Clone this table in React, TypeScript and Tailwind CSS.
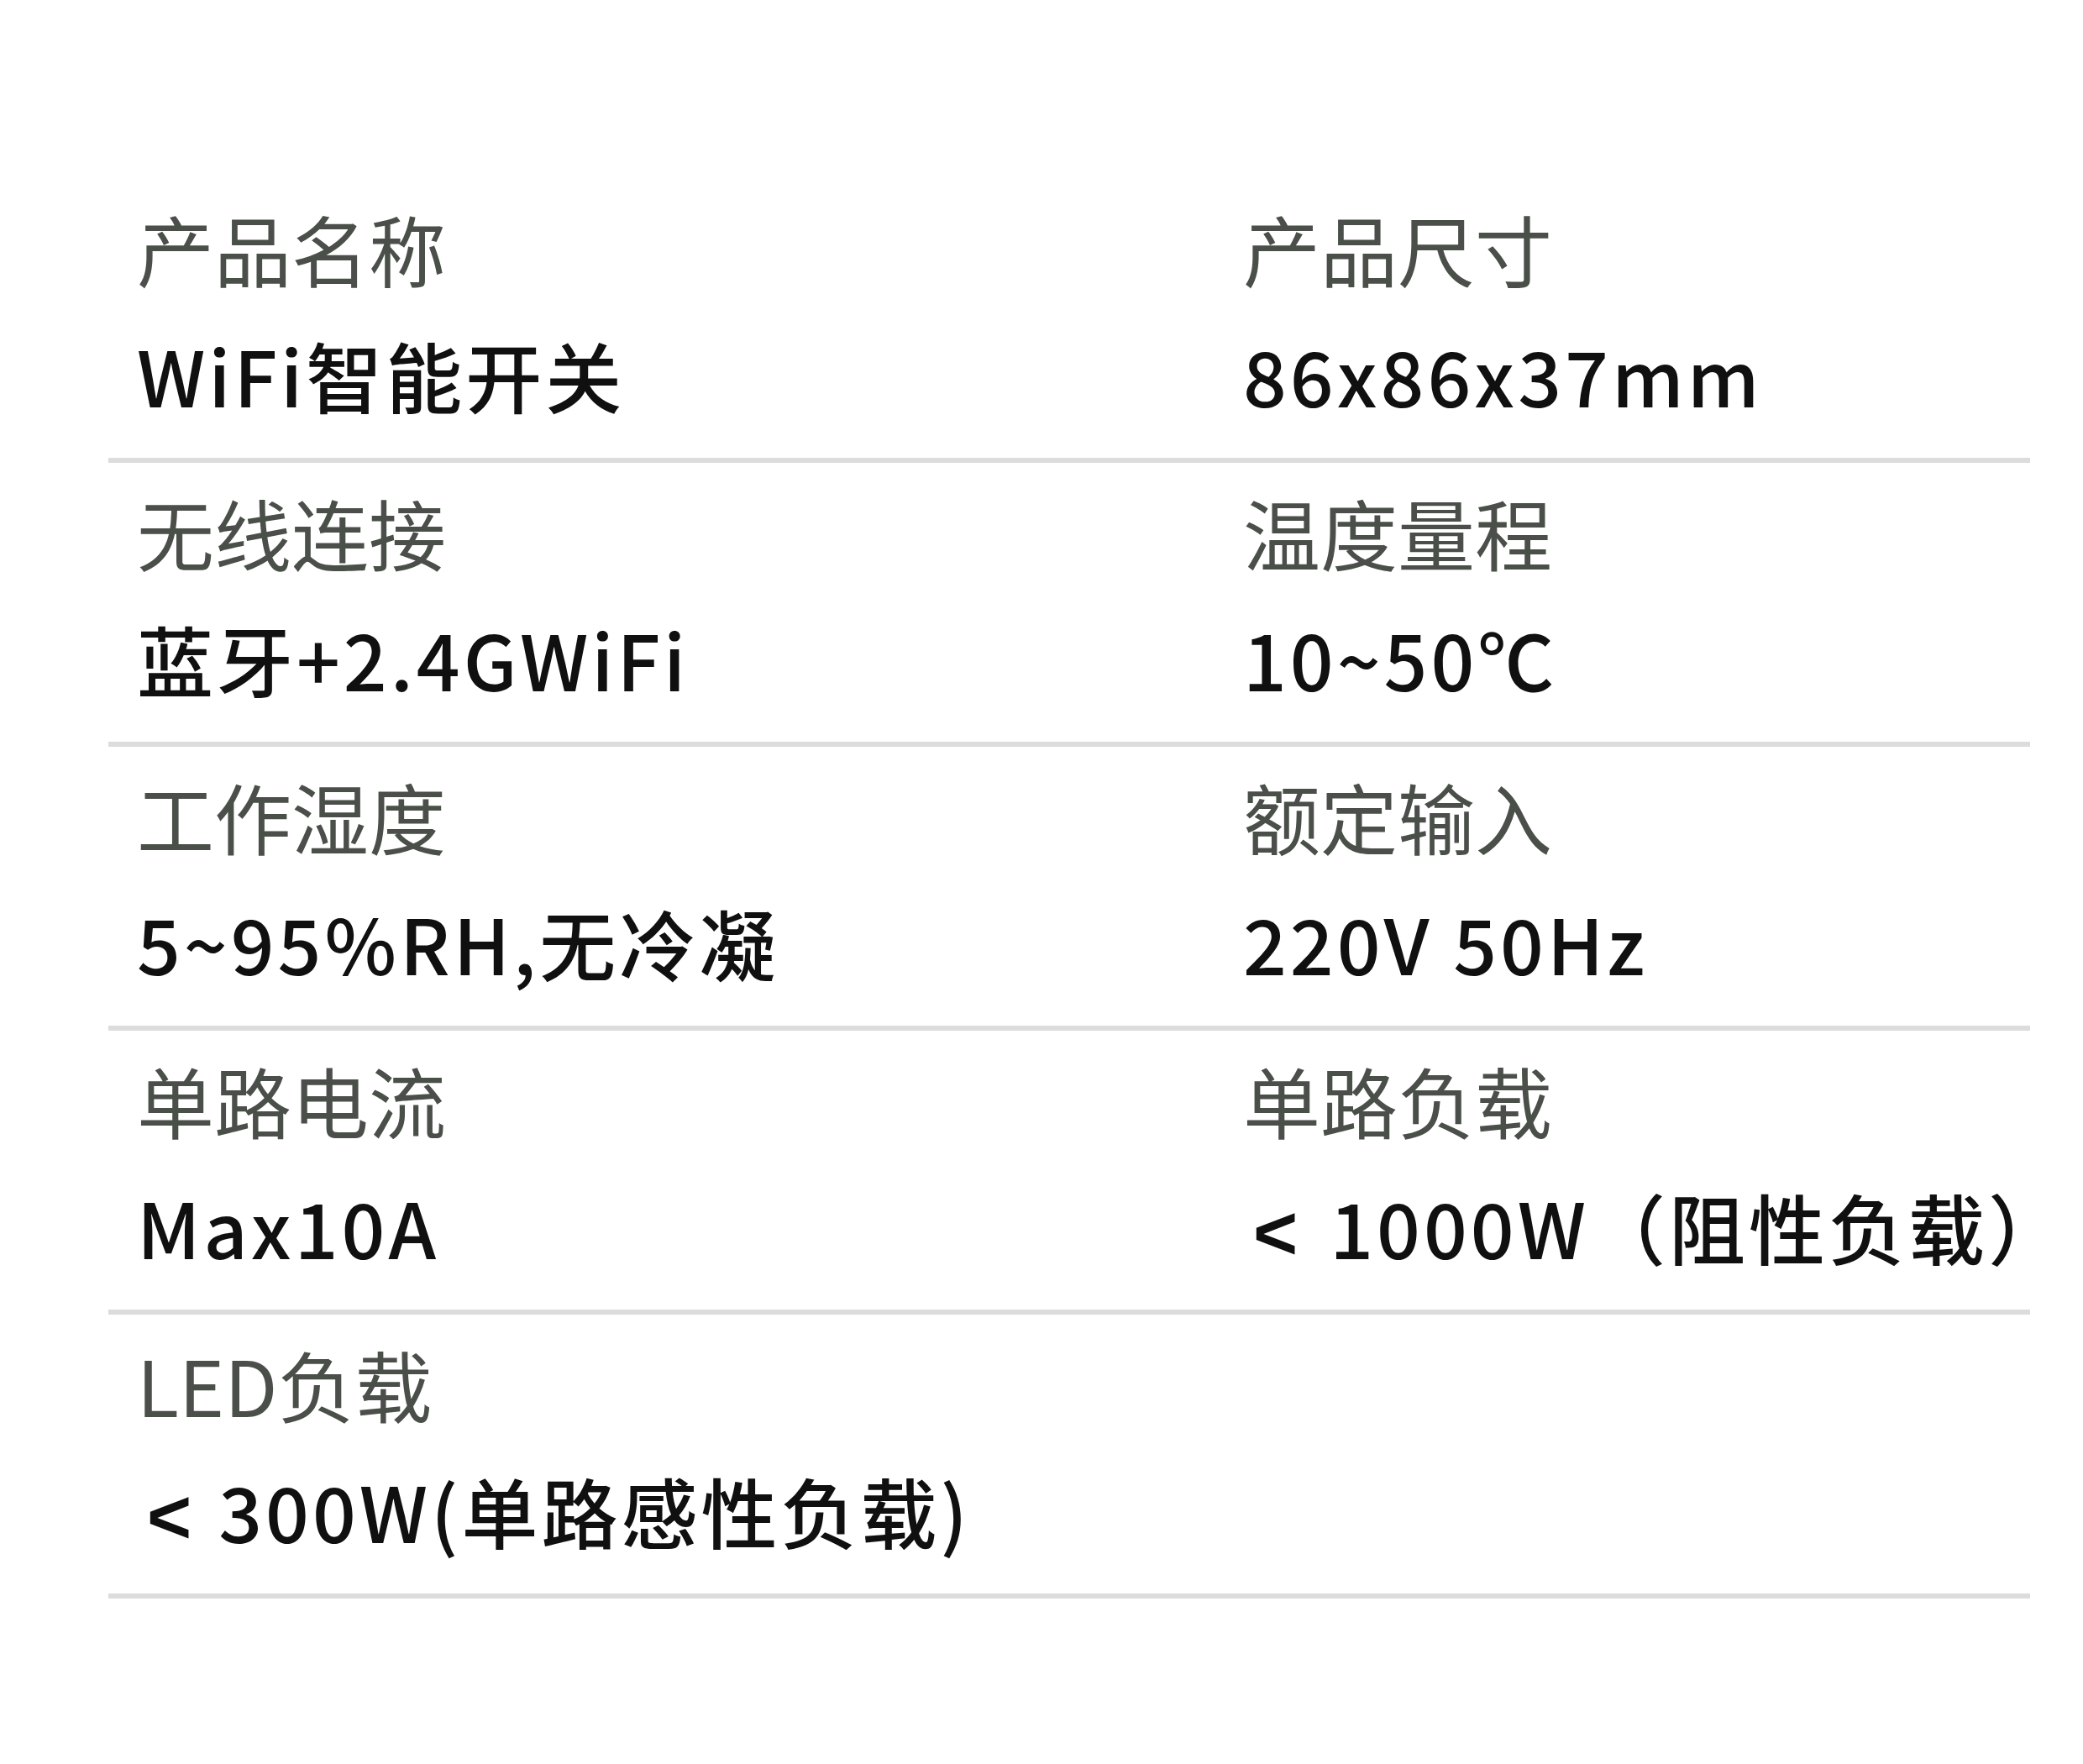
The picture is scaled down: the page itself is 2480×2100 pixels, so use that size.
import React from "react";

type Cell = { label: string; value: React.ReactNode };

const Lt = ({ gap }: { gap: string }) => (
  <span
    className={`inline-block ml-[12px] font-bold ${gap}`}
    style={{ fontFamily: '"Liberation Sans", sans-serif' }}
  >
    &lt;
  </span>
);

const rows: [Cell, Cell | null][] = [
  [
    { label: "产品名称", value: "WiFi智能开关" },
    { label: "产品尺寸", value: "86x86x37mm" },
  ],
  [
    { label: "无线连接", value: "蓝牙+2.4GWiFi" },
    { label: "温度量程", value: "10~50℃" },
  ],
  [
    { label: "工作湿度", value: "5~95%RH,无冷凝" },
    { label: "额定输入", value: "220V 50Hz" },
  ],
  [
    { label: "单路电流", value: "Max10A" },
    {
      label: "单路负载",
      value: (
        <>
          <Lt gap="mr-[34px]" />
          1000W（阻性负载）
        </>
      ),
    },
  ],
  [
    {
      label: "LED负载",
      value: (
        <>
          <Lt gap="mr-[28px]" />
          300W(单路感性负载)
        </>
      ),
    },
    null,
  ],
];

function SpecCell({ cell }: { cell: Cell | null }) {
  if (!cell) return <div />;
  return (
    <div className="flex flex-col pl-[34px] whitespace-nowrap">
      <div className="h-[150px] leading-[150px] text-[92px] font-normal text-[#4a5049]">
        {cell.label}
      </div>
      <div className="h-[150px] leading-[150px] text-[91px] font-medium tracking-[4px] text-[#101010]">
        {cell.value}
      </div>
    </div>
  );
}

export default function App() {
  return (
    <div
      className="w-[2480px] min-h-[2100px] bg-white pt-[213px] pl-[129px]"
      style={{ fontFamily: '"Noto Sans CJK SC", "Noto Sans", sans-serif' }}
    >
      <div className="w-[2288px] flex flex-col">
        {rows.map((r, i) => (
          <div
            key={i}
            className="grid grid-cols-[1317px_1fr] pt-[7px] pb-[25px] border-b-[6px] border-[#dcdcdc]"
          >
            <SpecCell cell={r[0]} />
            <SpecCell cell={r[1]} />
          </div>
        ))}
      </div>
    </div>
  );
}
